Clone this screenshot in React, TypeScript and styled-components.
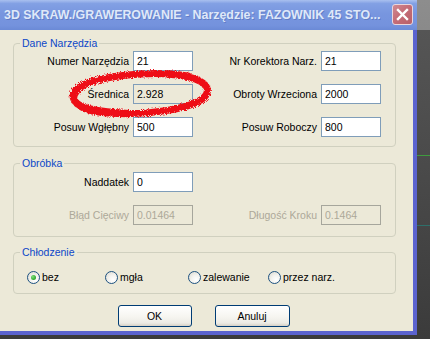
import React from 'react';
import styled, { createGlobalStyle } from 'styled-components';

const Global = createGlobalStyle`
  html, body { margin: 0; padding: 0; }
  body {
    width: 430px;
    height: 339px;
    overflow: hidden;
    background: #454545;
    font-family: "Liberation Sans", Arial, sans-serif;
  }
`;

const Desktop = styled.div`
  width: 430px;
  height: 339px;
  background:
    linear-gradient(#3f9a3f, #3f9a3f) no-repeat 417px 155px / 13px 1px,
    linear-gradient(#2e6f6a, #2e6f6a) no-repeat 417px 225px / 13px 1px,
    linear-gradient(to bottom, #8d8d8d 0, #8a8a8a 30px, #555 30px, #474747 60%, #3b3b3b 100%);
`;

const Window = styled.div`
  position: relative;
  width: 417px;
  display: flex;
  flex-direction: column;
`;

const TitleBar = styled.div`
  height: 30px;
  display: flex;
  align-items: center;
  justify-content: space-between;
  padding: 0 4px 0 4px;
  box-sizing: border-box;
  background: linear-gradient(to bottom, #a9c0ef 0%, #82a0e4 12%, #7896df 45%, #7492dd 85%, #6b8ad6 100%);
`;

const Title = styled.span`
  color: #dfe8f9;
  font-size: 12.4px;
  font-weight: bold;
  white-space: nowrap;
  text-shadow: 1px 1px 0 rgba(60, 80, 150, 0.35);
  margin-top: -1px;
`;

const CloseButton = styled.div`
  width: 21px;
  height: 21px;
  box-sizing: border-box;
  border: 1px solid #e9d6dc;
  border-radius: 3px;
  background: linear-gradient(135deg, #d08a92 0%, #c56d77 45%, #b85f69 100%);
  display: flex;
  align-items: center;
  justify-content: center;
  margin-bottom: 2px;
`;

const Frame = styled.div`
  height: 305px;
  box-sizing: border-box;
  background: #ece9d8;
  border-right: 4px solid #5b63cf;
  border-bottom: 4px solid #5b63cf;
  padding: 6px 17px 0 13px;
  display: flex;
  flex-direction: column;
`;

const Group = styled.fieldset<{ $pt: number; $pb: number; $mt: number }>`
  margin: ${p => p.$mt}px 0 0 0;
  padding: ${p => p.$pt}px 0 ${p => p.$pb}px 0;
  border: 1px solid #d0d0bf;
  border-radius: 4px;
  min-width: 0;
`;

const Legend = styled.legend`
  margin-left: 6px;
  padding: 0 2px;
  color: #0b47c8;
  font-size: 10.5px;
  line-height: 14px;
`;

const FieldGrid = styled.div`
  display: grid;
  grid-template-columns: 115px 60px 120px 60px;
  grid-auto-rows: 20px;
  column-gap: 4px;
  row-gap: 13px;
`;

const Label = styled.label<{ $disabled?: boolean; $col: number }>`
  grid-column: ${p => p.$col};
  display: flex;
  align-items: center;
  justify-content: flex-end;
  font-size: 10.5px;
  color: ${p => (p.$disabled ? '#aca899' : '#000')};
  white-space: nowrap;
`;

type Variant = 'normal' | 'readonly' | 'disabled';

const Field = styled.input<{ $variant: Variant; $col: number }>`
  grid-column: ${p => p.$col};
  width: 60px;
  height: 20px;
  box-sizing: border-box;
  margin: 0;
  padding: 0 3px;
  font-family: "Liberation Sans", Arial, sans-serif;
  font-size: 10.5px;
  outline: none;
  border: 1px solid ${p => (p.$variant === 'disabled' ? '#a6a69c' : '#7f9db9')};
  background: ${p => (p.$variant === 'normal' ? '#ffffff' : '#ece9d8')};
  color: ${p => (p.$variant === 'disabled' ? '#aca899' : '#000')};
`;

const RadioRow = styled.div`
  display: grid;
  grid-template-columns: 78px 83px 80px auto;
  padding-left: 13px;
  height: 16px;
  align-items: center;
`;

const RadioItem = styled.div`
  display: flex;
  align-items: center;
  gap: 2px;
  font-size: 10.5px;
  color: #000;
`;

const RadioCircle = styled.span<{ $checked?: boolean }>`
  width: 13px;
  height: 13px;
  box-sizing: border-box;
  border-radius: 50%;
  border: 1px solid #1c5180;
  background: radial-gradient(circle at 65% 70%, #ffffff 0%, #f3f2ee 45%, #d9d7cc 100%);
  display: flex;
  align-items: center;
  justify-content: center;
  &::after {
    content: '';
    display: ${p => (p.$checked ? 'block' : 'none')};
    width: 5px;
    height: 5px;
    border-radius: 50%;
    background: radial-gradient(circle at 35% 35%, #7fe07a 0%, #2ea62c 70%, #1d8a1c 100%);
  }
`;

const ButtonRow = styled.div`
  display: flex;
  justify-content: center;
  gap: 23px;
  margin-top: 11px;
  padding-right: 2px;
`;

const Button = styled.button<{ $w: number }>`
  width: ${p => p.$w}px;
  height: 22px;
  box-sizing: border-box;
  margin: 0;
  padding: 0;
  border: 1px solid #003c74;
  border-radius: 3px;
  background: linear-gradient(to bottom, #ffffff 0%, #f6f5f0 55%, #ecebe5 85%, #d6d0c5 100%);
  font-family: "Liberation Sans", Arial, sans-serif;
  font-size: 10.5px;
  color: #000;
`;

const Scribble = styled.svg`
  position: absolute;
  left: 0;
  top: 0;
  width: 417px;
  height: 335px;
  pointer-events: none;
`;

export default function App() {
  return (
    <>
      <Global />
      <Desktop>
        <Window>
          <TitleBar>
            <Title>3D SKRAW./GRAWEROWANIE - Narzędzie: FAZOWNIK 45 STO...</Title>
            <CloseButton>
              <svg width="13" height="13" viewBox="0 0 13 13">
                <path d="M2 2 L11 11 M11 2 L2 11" stroke="#ffffff" strokeWidth="2.4" strokeLinecap="square" />
              </svg>
            </CloseButton>
          </TitleBar>
          <Frame>
            <Group $pt={1} $pb={9} $mt={0}>
              <Legend>Dane Narzędzia</Legend>
              <FieldGrid>
                <Label $col={1}>Numer Narzędzia</Label>
                <Field $col={2} $variant="normal" defaultValue="21" readOnly />
                <Label $col={3}>Nr Korektora Narz.</Label>
                <Field $col={4} $variant="normal" defaultValue="21" readOnly />
                <Label $col={1}>Średnica</Label>
                <Field $col={2} $variant="readonly" defaultValue="2.928" readOnly />
                <Label $col={3}>Obroty Wrzeciona</Label>
                <Field $col={4} $variant="normal" defaultValue="2000" readOnly />
                <Label $col={1}>Posuw Wgłębny</Label>
                <Field $col={2} $variant="normal" defaultValue="500" readOnly />
                <Label $col={3}>Posuw Roboczy</Label>
                <Field $col={4} $variant="normal" defaultValue="800" readOnly />
              </FieldGrid>
            </Group>
            <Group $pt={2} $pb={11} $mt={9}>
              <Legend>Obróbka</Legend>
              <FieldGrid>
                <Label $col={1}>Naddatek</Label>
                <Field $col={2} $variant="normal" defaultValue="0" readOnly />
                <Label $col={1} $disabled>Błąd Cięciwy</Label>
                <Field $col={2} $variant="disabled" defaultValue="0.01464" readOnly />
                <Label $col={3} $disabled>Długość Kroku</Label>
                <Field $col={4} $variant="disabled" defaultValue="0.1464" readOnly />
              </FieldGrid>
            </Group>
            <Group $pt={10} $pb={8} $mt={8}>
              <Legend>Chłodzenie</Legend>
              <RadioRow>
                <RadioItem><RadioCircle $checked />bez</RadioItem>
                <RadioItem><RadioCircle />mgła</RadioItem>
                <RadioItem><RadioCircle />zalewanie</RadioItem>
                <RadioItem><RadioCircle />przez narz.</RadioItem>
              </RadioRow>
            </Group>
            <ButtonRow>
              <Button $w={74}>OK</Button>
              <Button $w={75}>Anuluj</Button>
            </ButtonRow>
          </Frame>
          <Scribble viewBox="0 0 417 335">
            <defs>
              <filter id="rough" x="-10%" y="-40%" width="120%" height="180%">
                <feTurbulence type="fractalNoise" baseFrequency="1.4" numOctaves="3" seed="7" />
                <feDisplacementMap in="SourceGraphic" scale="4.5" />
              </filter>
            </defs>
            <g filter="url(#rough)" fill="none" stroke="#ee0e16" strokeLinecap="round">
              <path
                d="M188 76 C150 70, 95 76, 78 88 C66 97, 76 111, 108 113 C145 116, 197 109, 206 95 C212 85, 199 76, 166 74"
                strokeWidth="7"
              />
              <path
                d="M202 82 C186 74, 140 72, 110 77 C90 81, 75 90, 75 99 C79 108, 110 112, 142 112"
                strokeWidth="4"
              />
              <path
                d="M150 112 C175 111, 200 104, 207 92"
                strokeWidth="4"
              />
            </g>
          </Scribble>
        </Window>
      </Desktop>
    </>
  );
}
